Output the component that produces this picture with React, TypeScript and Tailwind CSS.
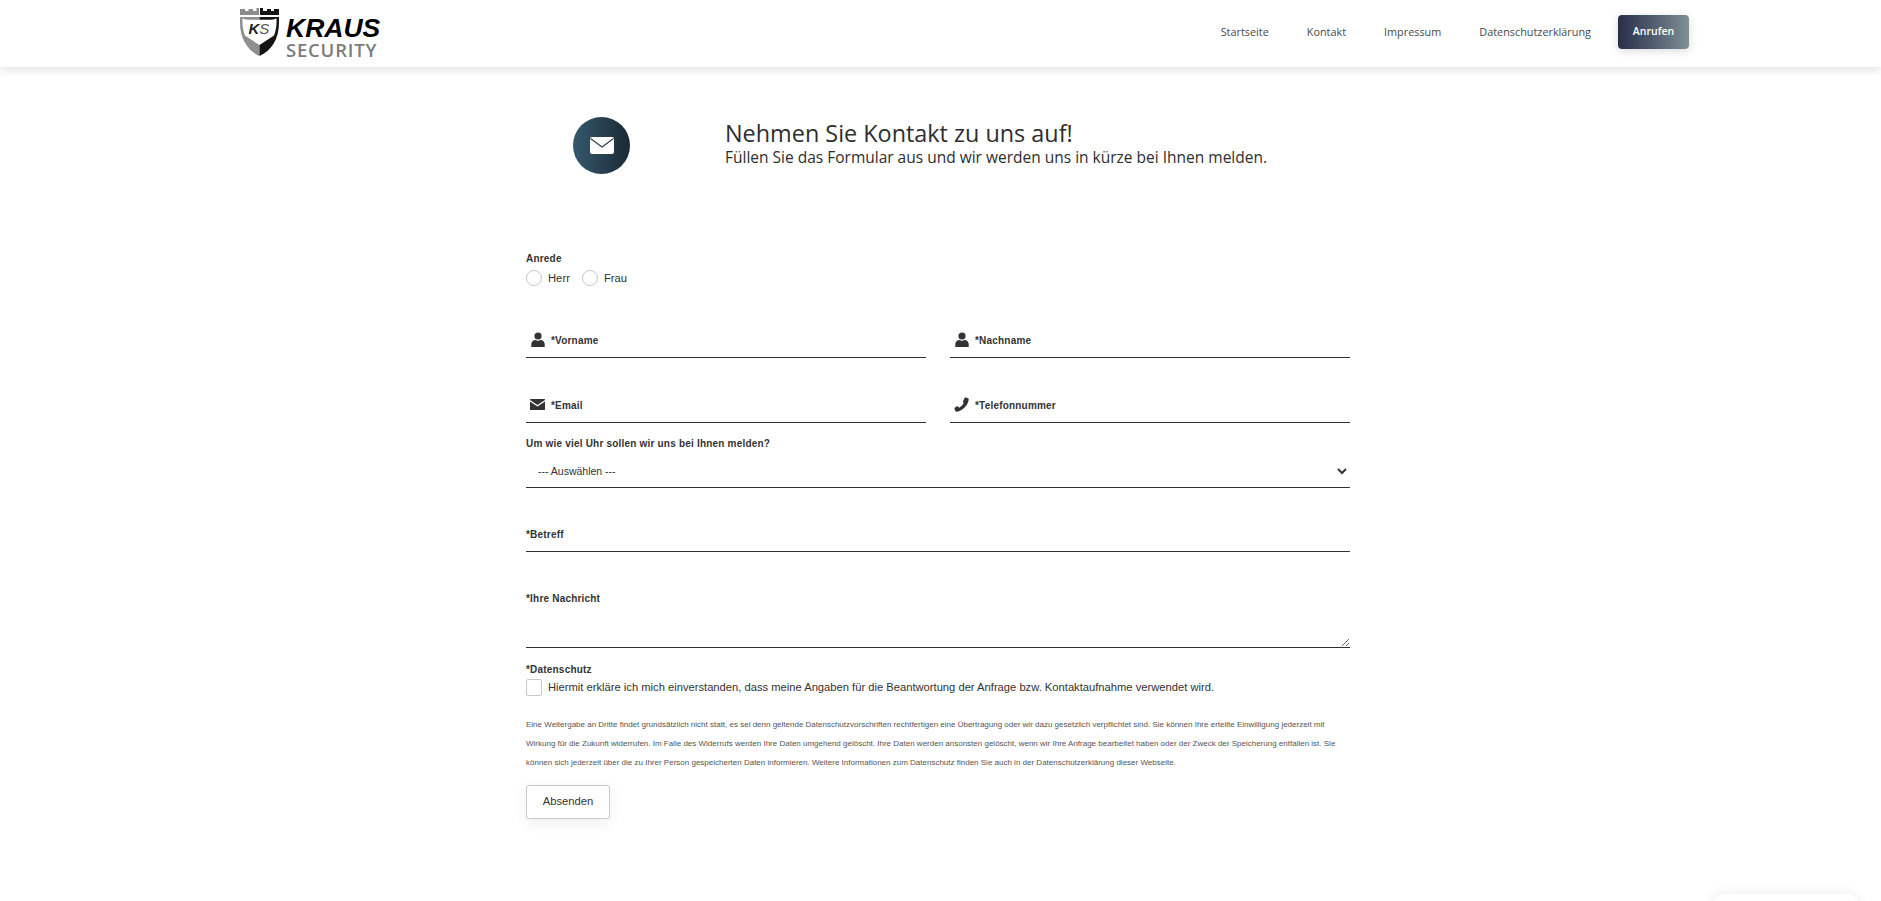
import React from "react";

const sans = "font-['Liberation_Sans',Arial,sans-serif]";
const ui = "font-['Open_Sans','Noto_Sans',sans-serif]";
const labelCls = "text-[10px] leading-[12px] font-bold text-[#333] tracking-[0.2px]";

function Logo() {
  return (
    <div className="flex items-start gap-[8px] pb-[2px]">
      <svg width="39" height="48" viewBox="0 0 39 48" className="block">
        <path d="M0 7V1h5v2h3.500V1H13v2h3.500V0H19v7z" fill="#8b8b8b" />
        <path d="M20 7V0h3v3h4V1h4v2h3V1h5v6z" fill="#151515" />
        <path d="M0 9h19.500v39C8 43 0 31 0 15z" fill="#8f8f8f" />
        <path d="M39 9H19.500v39C31 43 39 31 39 15z" fill="#151515" />
        <path d="M2.500 10.500c2 .8 4 1.200 6 1.200h22c2 0 4-.4 6-1.200.4 6-.6 12-2.500 17L19.500 37 5 27.500c-1.900-5-2.900-11-2.500-17z" fill="#fff" />
        <text x="8.500" y="26" fontSize="15" fontStyle="italic" fontFamily="Liberation Sans">
          <tspan fontWeight="700" fill="#222">K</tspan>
          <tspan fill="#555">S</tspan>
        </text>
      </svg>
      <div className="flex flex-col pt-[8px]">
        <span className={`text-[26.500px] leading-[25px] font-bold italic text-black -ml-[1px] ${sans}`}>KRAUS</span>
        <span className="text-[18.500px] leading-[17px] text-[#7c7c7c] font-['Open_Sans',sans-serif] font-semibold tracking-[0.8px] -ml-[1px]">SECURITY</span>
      </div>
    </div>
  );
}

function PersonIcon() {
  return (
    <svg width="14" height="15" viewBox="0 0 14 15" fill="#333">
      <circle cx="7" cy="4" r="3.600" />
      <path d="M0.300 15v-3c0-2.400 2-3.800 4.200-4 1.400 1 3.600 1 5 0 2.200.2 4.200 1.600 4.200 4v3z" />
    </svg>
  );
}
function MailIcon() {
  return (
    <svg width="15" height="11" viewBox="0 0 15 11" fill="#333">
      <path d="M0 .5A.5.5 0 0 1 .5 0h14a.5.5 0 0 1 .5.5v.5L7.500 6 0 1z" />
      <path d="M0 2.500l7.500 5L15 2.500V10.500a.5.5 0 0 1-.5.5H.5a.5.5 0 0 1-.5-.5z" />
    </svg>
  );
}
function PhoneIcon() {
  return (
    <svg width="15" height="15" viewBox="0 0 15 15" fill="#333">
      <path d="M11 .3l3 1c.6.3.8.8.7 1.500C14 8.500 8.500 14 2.800 14.700c-.7.100-1.200-.1-1.500-.7l-1-3 3.200-2 1.500 1.700c2-.9 3.700-2.600 4.600-4.600L8.900 4.600z" />
    </svg>
  );
}

function Field({ icon, label, className = "" }: { icon?: React.ReactNode; label: string; className?: string }) {
  return (
    <div className={`flex items-center h-[36px] pt-[3px] border-b border-[#333] ${className}`}>
      {icon && <span className="w-[17px] ml-[3px] mr-[5px] -mt-[3px] flex justify-center shrink-0">{icon}</span>}
      <span className={labelCls}>{label}</span>
    </div>
  );
}

export default function App() {
  return (
    <div className={`min-h-[901px] bg-white overflow-hidden relative ${sans}`}>
      <header className="h-[67px] bg-white shadow-[0_2px_10px_rgba(0,0,0,0.14)] flex items-center pl-[240px] pr-[192px] justify-between">
        <Logo />
        <nav className={`flex items-center pb-[3px] text-[10.850px] text-[#4a4a4a] ${ui}`}>
          <a className="mr-[38px]">Startseite</a>
          <a className="mr-[38px]">Kontakt</a>
          <a className="mr-[38px]">Impressum</a>
          <a className="mr-[27px]">Datenschutzerklärung</a>
          <a className="w-[71px] h-[34px] rounded-[4px] flex items-center justify-center text-white text-[10.500px] font-semibold bg-gradient-to-r from-[#2a2f4a] to-[#7f9094] shadow-[0_2px_8px_rgba(0,0,0,0.15)]">Anrufen</a>
        </nav>
      </header>

      <main className="ml-[526px] w-[824px]">
        <section className="flex items-center mt-[50px] pl-[47px]">
          <div className="w-[57px] h-[57px] rounded-full bg-gradient-to-r from-[#36596f] to-[#1a2a34] flex items-center justify-center">
            <svg width="24" height="17" viewBox="0 0 24 17">
              <rect width="24" height="17" rx="2" fill="#fff" />
              <path d="M0.500 1.500L12 10L23.500 1.500" stroke="#27404f" strokeWidth="1.100" fill="none" />
            </svg>
          </div>
          <div className={`ml-[95px] pb-[7px] text-[#2e2e2e] ${ui}`}>
            <h1 className="text-[23.400px] leading-[30px] font-medium">Nehmen Sie Kontakt zu uns auf!</h1>
            <p className="text-[15.500px] leading-[19px] font-medium">Füllen Sie das Formular aus und wir werden uns in kürze bei Ihnen melden.</p>
          </div>
        </section>

        <section className="mt-[79px]">
          <div className={labelCls}>Anrede</div>
          <div className="flex items-center mt-[5px] text-[11.250px] text-[#333]">
            <span className="w-[16px] h-[16px] rounded-full border border-[#c8c8c8]" />
            <span className="ml-[6px]">Herr</span>
            <span className="w-[16px] h-[16px] rounded-full border border-[#c8c8c8] ml-[12px]" />
            <span className="ml-[6px]">Frau</span>
          </div>
        </section>

        <div className="grid grid-cols-2 gap-x-[24px] gap-y-[29px] mt-[35px]">
          <Field icon={<PersonIcon />} label="*Vorname" />
          <Field icon={<PersonIcon />} label="*Nachname" />
          <Field icon={<MailIcon />} label="*Email" />
          <Field icon={<PhoneIcon />} label="*Telefonnummer" />
        </div>

        <div className={`${labelCls} mt-[15px]`}>Um wie viel Uhr sollen wir uns bei Ihnen melden?</div>
        <div className="flex items-center justify-between h-[31px] mt-[7px] pl-[12px] pr-[3px] border-b border-[#333] text-[10.500px] text-[#333]">
          <span>--- Auswählen ---</span>
          <svg width="10" height="7" viewBox="0 0 10 7" fill="none" stroke="#333" strokeWidth="2"><path d="M1 1l4 4 4-4" /></svg>
        </div>

        <Field label="*Betreff" className="mt-[28px]" />

        <div className={`${labelCls} mt-[41px]`}>*Ihre Nachricht</div>
        <textarea className="block w-full h-[43px] border-b border-[#333] outline-none resize-y" />

        <div className={`${labelCls} mt-[16px]`}>*Datenschutz</div>
        <div className="flex items-center mt-[3px]">
          <span className="w-[16px] h-[17px] rounded-[2px] border border-[#c8c8c8]" />
          <span className="ml-[6px] text-[11.200px] text-[#333]">Hiermit erkläre ich mich einverstanden, dass meine Angaben für die Beantwortung der Anfrage bzw. Kontaktaufnahme verwendet wird.</span>
        </div>

        <p className="mt-[19px] text-[8px] leading-[19px] text-[#555]">
          Eine Weitergabe an Dritte findet grundsätzlich nicht statt, es sei denn geltende Datenschutzvorschriften rechtfertigen eine Übertragung oder wir dazu gesetzlich verpflichtet sind. Sie können Ihre erteilte Einwilligung jederzeit mit Wirkung für die Zukunft widerrufen. Im Falle des Widerrufs werden Ihre Daten umgehend gelöscht. Ihre Daten werden ansonsten gelöscht, wenn wir Ihre Anfrage bearbeitet haben oder der Zweck der Speicherung entfallen ist. Sie können sich jederzeit über die zu Ihrer Person gespeicherten Daten informieren. Weitere Informationen zum Datenschutz finden Sie auch in der Datenschutzerklärung dieser Webseite.
        </p>

        <button className="mt-[13px] w-[84px] h-[34px] rounded-[3px] border border-[#c8c8c8] bg-white text-[11.250px] text-[#333] shadow-[0_4px_14px_rgba(0,0,0,0.07)]">Absenden</button>
      </main>

      <div className="absolute left-[1713px] top-[894px] w-[145px] h-[60px] rounded-[10px] bg-white shadow-[0_0_14px_rgba(0,0,0,0.08)]" />
    </div>
  );
}
